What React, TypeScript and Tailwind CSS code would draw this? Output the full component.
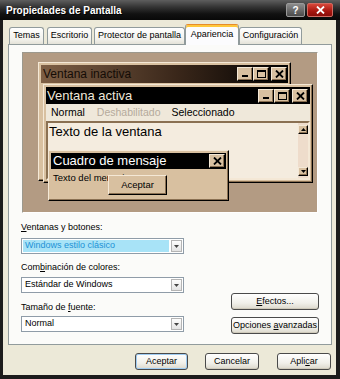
import type { ReactNode } from 'react';

// 3D raised block used by the preview's classic-style widgets
const raised =
  'border border-t-[#f4e8d6] border-l-[#f4e8d6] border-r-black border-b-black bg-[#d8c0a0] shadow-[inset_-1px_-1px_0_#8a7052]';

const CapButton = ({ kind, className = '' }: { kind: 'min' | 'max' | 'close'; className?: string }) => (
  <div className={`relative flex items-center justify-center ${raised} ${className}`}>
    {kind === 'min' && <div className="absolute bottom-[3px] left-[4px] h-[2px] w-[6px] bg-black" />}
    {kind === 'max' && <div className="h-[8px] w-[9px] border border-t-2 border-black" />}
    {kind === 'close' && (
      <svg width="9" height="8" viewBox="0 0 9 8">
        <path d="M1 0.5 8 7.5M8 0.5 1 7.5" stroke="black" strokeWidth={1.8} />
      </svg>
    )}
  </div>
);

const Tab = ({ label, className = '', active }: { label: string; className?: string; active?: boolean }) =>
  active ? (
    <div className={`relative z-10 -mb-px flex h-[21px] items-start justify-center rounded-t-[3px] border border-b-0 border-[#919b9c] border-t-[#e68b2c] bg-[#fcfcfe] pt-[3px] shadow-[inset_0_2px_0_#ffc83c] ${className}`}>
      {label}
    </div>
  ) : (
    <div className={`flex h-[17px] items-center justify-center rounded-t-[3px] border border-b-0 border-[#919b9c] bg-[linear-gradient(#ffffff,#f3f2ec_70%,#e4e2d8)] ${className}`}>
      {label}
    </div>
  );

const Select = ({ children, highlight }: { children: ReactNode; highlight?: boolean }) => (
  <div className="flex h-[16px] w-[163px] items-stretch border border-[#8f9ca8] bg-white p-px">
    <div
      className={`flex flex-1 items-center pl-[2px] ${highlight ? 'bg-[#a8e3f7] text-[#1d92d6]' : 'text-black'}`}
    >
      {children}
    </div>
    <div className="ml-[2px] flex w-[11px] items-center justify-center border border-[#b4b4b4] bg-[linear-gradient(#fdfdfd,#e3e3e3)]">
      <svg width="5" height="3" viewBox="0 0 5 3">
        <path d="M0 0h5L2.5 3z" fill="#444" />
      </svg>
    </div>
  </div>
);

const Button = ({ children, className = '', focus }: { children: ReactNode; className?: string; focus?: boolean }) => (
  <div
    className={`flex h-[17px] items-center justify-center rounded-[3px] border border-[#4a4a4a] bg-[linear-gradient(#ffffff,#f1f0ea_60%,#dcd8cc)] ${
      focus ? 'shadow-[inset_0_0_0_1px_#9fccf2]' : 'shadow-[inset_0_-1px_0_#cfcabb]'
    } ${className}`}
  >
    {children}
  </div>
);

const Preview = () => (
  <div className="relative ml-[13px] mt-[7px] h-[161px] w-[296px] border border-t-[#9c998e] border-l-[#9c998e] border-r-white border-b-white bg-[#b39b83] font-['Liberation_Sans',Arial,sans-serif]">
    {/* ventana inactiva */}
    <div className={`absolute left-[15px] top-[9px] h-[119px] w-[253px] p-[2px] ${raised}`}>
      <div className="flex h-[18px] items-center justify-between bg-[linear-gradient(to_right,#7e5f45,#3a271a_55%,#000)] pl-[2px] pr-px text-[12px] text-[#140c06]">
        <span>Ventana inactiva</span>
        <div className="flex">
          <CapButton kind="min" className="h-[14px] w-[16px]" />
          <CapButton kind="max" className="h-[14px] w-[16px]" />
          <CapButton kind="close" className="ml-[2px] h-[14px] w-[16px]" />
        </div>
      </div>
    </div>

    {/* ventana activa */}
    <div className={`absolute left-[20px] top-[31px] flex h-[99px] w-[270px] flex-col p-[2px] ${raised}`}>
      <div className="flex h-[17px] items-center justify-between bg-black pl-px pr-[2px] text-[13px] text-[#efe7da]">
        <span>Ventana activa</span>
        <div className="flex">
          <CapButton kind="min" className="h-[14px] w-[16px]" />
          <CapButton kind="max" className="h-[14px] w-[16px]" />
          <CapButton kind="close" className="ml-[2px] h-[14px] w-[16px]" />
        </div>
      </div>
      <div className="flex h-[17px] items-center bg-[#efe8da] text-[10.5px]">
        <span className="ml-[5px] text-black">Normal</span>
        <span className="ml-[12px] text-[#b5aa9c]">Deshabilitado</span>
        <span className="ml-[11px] text-black">Seleccionado</span>
      </div>
      <div className="flex flex-1 border-2 border-t-[#8a7052] border-l-[#8a7052] border-r-[#f4e8d6] border-b-[#f4e8d6] bg-[#f4ecdf]">
        <div className="flex-1 pl-px text-[13px] leading-[17px] text-black">Texto de la ventana</div>
        <div className="flex w-[10px] flex-col justify-between bg-[#eedccb] py-[2px]">
          <div className={`flex h-[9px] items-center justify-center ${raised}`}>
            <svg width="5" height="3" viewBox="0 0 5 3">
              <path d="M2.5 0 5 3H0z" fill="black" />
            </svg>
          </div>
          <div className={`flex h-[9px] items-center justify-center ${raised}`}>
            <svg width="5" height="3" viewBox="0 0 5 3">
              <path d="M0 0h5L2.5 3z" fill="black" />
            </svg>
          </div>
        </div>
      </div>
    </div>

    {/* cuadro de mensaje */}
    <div className={`absolute left-[25px] top-[97px] flex h-[51px] w-[181px] flex-col p-[2px] ${raised}`}>
      <div className="flex h-[16px] items-center justify-between bg-black pl-[2px] pr-px text-[13px] text-white">
        <span>Cuadro de mensaje</span>
        <CapButton kind="close" className="h-[14px] w-[16px]" />
      </div>
      <div className="relative flex-1">
        <span className="absolute left-[2px] top-[3px] text-[9.5px] leading-[11px] text-black">Texto del mensaje</span>
        <div className={`absolute left-[57px] top-[6px] flex h-[20px] w-[59px] items-center justify-center text-[9.5px] text-black ${raised}`}>
          Aceptar
        </div>
      </div>
    </div>
  </div>
);

export default function App() {
  return (
    <div className="flex h-[379px] w-[340px] flex-col bg-[#1c1c1c] font-['Liberation_Sans',Arial,sans-serif] text-[9px] text-black">
      {/* barra de título */}
      <div className="flex h-[20px] shrink-0 items-center justify-between bg-[linear-gradient(#5e5e5e,#343434_35%,#111_70%,#080808)] pl-[6px] pr-[7px]">
        <span className="text-[10px] font-bold text-white [text-shadow:1px_1px_0_#000]">Propiedades de Pantalla</span>
        <div className="flex gap-[2px]">
          <div className="flex h-[14px] w-[19px] items-center justify-center rounded-[2px] border border-[#9a9a9a] bg-[linear-gradient(#8c8c8c,#4a4a4a)] text-[10px] font-bold text-white">
            ?
          </div>
          <div className="flex h-[14px] w-[26px] items-center justify-center rounded-[2px] border border-[#d06a60] bg-[linear-gradient(#d8473a,#a8160f_60%,#8a0c08)]">
            <svg width="9" height="8" viewBox="0 0 9 8">
              <path d="M1 0.5 8 7.5M8 0.5 1 7.5" stroke="white" strokeWidth={1.8} />
            </svg>
          </div>
        </div>
      </div>

      <div className="ml-[3px] mr-[4px] flex flex-1 flex-col bg-[#ece9d8] pl-[5px] pr-[4px]">
        {/* pestañas */}
        <div className="flex h-[24px] shrink-0 items-end pl-px">
          <Tab label="Temas" className="w-[35px]" />
          <Tab label="Escritorio" className="ml-[3px] w-[45px]" />
          <Tab label="Protector de pantalla" className="ml-[2px] w-[91px]" />
          <Tab label="Apariencia" className="w-[54px]" active />
          <Tab label="Configuración" className="w-[63px]" />
        </div>

        <div className="flex h-[301px] flex-col border border-[#919b9c] bg-[#fbfbf9]">
          <Preview />

          <div className="flex">
            <div className="ml-[12px] flex w-[163px] flex-col">
              <div className="mt-[9px] leading-[11px]">
                <span className="underline">V</span>entanas y botones:
              </div>
              <div className="mt-[5px]">
                <Select highlight>Windows estilo clásico</Select>
              </div>
              <div className="mt-[8px] leading-[11px]">
                Com<span className="underline">b</span>inación de colores:
              </div>
              <div className="mt-[4px]">
                <Select>Estándar de Windows</Select>
              </div>
              <div className="mt-[9px] leading-[11px]">
                Tamaño de <span className="underline">f</span>uente:
              </div>
              <div className="mt-[3px]">
                <Select>Normal</Select>
              </div>
            </div>
            <div className="ml-[47px] flex w-[88px] flex-col gap-[7px] pt-[80px]">
              <Button>
                <span>
                  <span className="underline">E</span>fectos...
                </span>
              </Button>
              <Button>
                <span>
                  Opciones <span className="underline">a</span>vanzadas
                </span>
              </Button>
            </div>
          </div>
        </div>

        {/* botones inferiores */}
        <div className="mt-[8px] flex justify-end pr-px">
          <Button className="w-[53px]" focus>
            Aceptar
          </Button>
          <Button className="ml-[17px] w-[54px]">Cancelar</Button>
          <Button className="ml-[18px] w-[54px]">
            <span>
              Apli<span className="underline">c</span>ar
            </span>
          </Button>
        </div>
      </div>
      <div className="h-[4px] shrink-0" />
    </div>
  );
}
